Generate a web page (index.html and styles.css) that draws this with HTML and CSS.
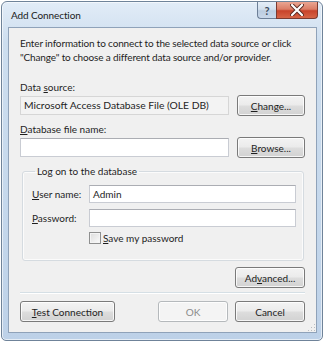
FILE: index.html
```html
<!DOCTYPE html>
<html lang="en">
<head>
    <meta charset="UTF-8">
    <title>Add Connection</title>
    <link rel="stylesheet" href="styles.css">
</head>
<body>
    <div class="window">
        <div class="titlebar">
            <span class="title">Add Connection</span>
            <div class="caption">
                <div class="cap help">?</div>
                <div class="cap close">
                    <svg width="14" height="12" viewBox="0 0 14 12">
                        <path d="M2 1 L12 11 M12 1 L2 11" stroke="#5a2a22" stroke-width="4" stroke-linecap="round"/>
                        <path d="M2 1 L12 11 M12 1 L2 11" stroke="#fff" stroke-width="2.2" stroke-linecap="round"/>
                    </svg>
                </div>
            </div>
        </div>
        <div class="client">
            <p class="intro">Enter information to connect to the selected data source or click<br>"Change" to choose a different data source and/or provider.</p>

            <div class="label first">Data <u>s</u>ource:</div>
            <div class="row">
                <div class="field readonly">Microsoft Access Database File (OLE DB)</div>
                <button class="btn"><u>C</u>hange...</button>
            </div>

            <div class="label"><u>D</u>atabase file name:</div>
            <div class="row">
                <div class="field"></div>
                <button class="btn"><u>B</u>rowse...</button>
            </div>

            <fieldset class="group">
                <legend>Log on to the database</legend>
                <div class="grow">
                    <span class="glabel"><u>U</u>ser name:</span>
                    <div class="field">Admin</div>
                </div>
                <div class="grow">
                    <span class="glabel"><u>P</u>assword:</span>
                    <div class="field"></div>
                </div>
                <div class="check">
                    <span class="box"></span>
                    <span><u>S</u>ave my password</span>
                </div>
            </fieldset>

            <div class="adv">
                <button class="btn wide">Ad<u>v</u>anced...</button>
            </div>

            <div class="sep"></div>

            <div class="footer">
                <button class="btn test"><u>T</u>est Connection</button>
                <div class="right">
                    <button class="btn wide disabled">OK</button>
                    <button class="btn wide">Cancel</button>
                </div>
            </div>
            <div class="grip"></div>
        </div>
    </div>
</body>
</html>
```

FILE: styles.css
```css
* {
    margin: 0;
    padding: 0;
    box-sizing: border-box;
}
body {
    background: #fff;
    font-family: 'Lato', sans-serif;
    font-size: 10px;
    color: #1e1e1e;
}
.window {
    margin: 1px 0 0 1px;
    width: 322px;
    height: 340px;
    border: 1px solid #6f8399;
    border-radius: 6px 6px 5px 5px;
    background: linear-gradient(180deg, #e2ecf7 0%, #cddeef 12%, #c5d8ec 60%, #bdd1e8 100%);
    box-shadow: inset 0 0 0 1px rgba(255, 255, 255, 0.6);
    padding: 0 5px 7px 6px;
    display: flex;
    flex-direction: column;
}
.titlebar {
    height: 25px;
    display: flex;
    justify-content: space-between;
    align-items: flex-start;
}
.title {
    font-size: 10px;
    letter-spacing: -0.1px;
    color: #1a1a1a;
    margin: 7px 0 0 3px;
}
.caption {
    display: flex;
    margin-right: -1px;
}
.cap {
    height: 17px;
    display: flex;
    align-items: center;
    justify-content: center;
    border: 1px solid #6d7f97;
    border-top: none;
}
.help {
    width: 19px;
    border-radius: 0 0 0 4px;
    border-right: none;
    background: linear-gradient(180deg, #e5eef8 0%, #d3e0ee 45%, #bccde0 55%, #c9d8ea 100%);
    color: #3c4a5c;
    font-weight: 700;
    font-size: 11px;
}
.close {
    width: 42px;
    border-color: #7b3a30;
    border-radius: 0 0 4px 0;
    background: linear-gradient(180deg, #eaa592 0%, #db7d66 45%, #c8432a 55%, #d66446 100%);
}
.client {
    flex: 1;
    border: 1px solid #8fa2b9;
    background: #f0f0f0;
    padding: 0 11px 0 11px;
    display: flex;
    flex-direction: column;
    position: relative;
}
.intro {
    margin-top: 8px;
    line-height: 14px;
    white-space: nowrap;
    letter-spacing: -0.15px;
}
.label {
    line-height: 14px;
    margin-top: 6px;
}
.label.first {
    margin-top: 16px;
}
.row {
    margin-top: 1px;
    display: flex;
    align-items: center;
    justify-content: space-between;
    height: 21px;
}
.field {
    width: 209px;
    height: 19px;
    background: #fff;
    border: 1px solid #c9ccd3;
    border-top-color: #abadb3;
    padding: 0 3px;
    line-height: 17px;
}
.field.readonly {
    background: #f3f3f3;
    border-color: #d6d6d6;
    font-size: 10.3px;
}
.btn {
    font-family: inherit;
    font-size: 10px;
    color: #1e1e1e;
    height: 21px;
    width: 68px;
    border: 1px solid #7a7a7a;
    border-radius: 3px;
    background: linear-gradient(180deg, #f3f3f3 0%, #ebebeb 48%, #dddddd 52%, #d2d2d2 100%);
    box-shadow: inset 0 0 0 1px rgba(255, 255, 255, 0.8);
}
.btn.wide {
    width: 70px;
}
.btn.test {
    width: 95px;
}
.btn.disabled {
    color: #8a8a8a;
    border-color: #b5b9bc;
    background: #f4f4f4;
}
.group {
    margin: 6px 1px 0 2px;
    border: 1px solid #d5dbe0;
    border-radius: 3px;
    height: 97px;
    padding: 7px 7px 0 9px;
    box-shadow: inset 0 0 0 1px rgba(255, 255, 255, 0.7);
}
.group legend {
    margin-left: 3px;
    padding: 0 2px;
    line-height: 14px;
}
.grow {
    display: flex;
    align-items: center;
    justify-content: space-between;
    height: 18px;
    margin-bottom: 6px;
}
.grow .field {
    width: 207px;
    height: 18px;
    line-height: 16px;
}
.check {
    display: flex;
    align-items: center;
    gap: 2px;
    margin-left: 57px;
    margin-top: -1px;
}
.box {
    width: 12px;
    height: 12px;
    border: 1px solid #8e8f8f;
    background: linear-gradient(135deg, #dcdcdc, #fbfbfb);
    box-shadow: inset 0 0 0 1px #f4f4f4;
}
.adv {
    display: flex;
    justify-content: flex-end;
    margin-top: 6px;
}
.sep {
    margin-top: 4px;
    height: 2px;
    border-top: 1px solid #d5dfe5;
    border-bottom: 1px solid #fff;
}
.footer {
    margin-top: 7px;
    display: flex;
    justify-content: space-between;
}
.right {
    display: flex;
    gap: 7px;
}
.grip {
    position: absolute;
    right: 1px;
    bottom: 1px;
    width: 8px;
    height: 8px;
    background: radial-gradient(circle, #b9bcc0 40%, transparent 45%) 0 0 / 3px 3px;
    clip-path: polygon(100% 0, 100% 100%, 0 100%);
}
```
